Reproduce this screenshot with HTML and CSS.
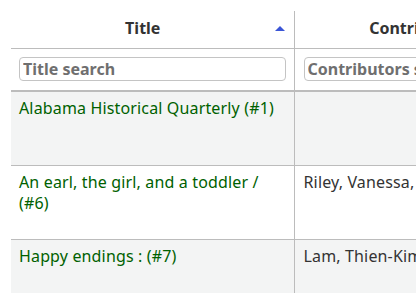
FILE: index.html
```html
<!DOCTYPE html>
<html lang="en">
<head>
    <meta charset="UTF-8">
    <title>Serials</title>
    <link rel="stylesheet" href="styles.css">
</head>
<body>
    <div class="wrap">
        <table class="results">
            <thead>
                <tr class="head-row">
                    <th class="col-title sorted">Title <span class="sort-arrow"></span></th>
                    <th class="col-contrib">Contributors</th>
                </tr>
                <tr class="filter-row">
                    <th class="col-title"><input type="text" placeholder="Title search"></th>
                    <th class="col-contrib"><input type="text" placeholder="Contributors search"></th>
                </tr>
            </thead>
            <tbody>
                <tr class="odd">
                    <td class="col-title"><a href="#">Alabama Historical Quarterly (#1)</a></td>
                    <td class="col-contrib"></td>
                </tr>
                <tr class="even">
                    <td class="col-title"><a href="#">An earl, the girl, and a toddler / (#6)</a></td>
                    <td class="col-contrib">Riley, Vanessa, author.</td>
                </tr>
                <tr class="odd">
                    <td class="col-title"><a href="#">Happy endings : (#7)</a></td>
                    <td class="col-contrib">Lam, Thien-Kim, author.</td>
                </tr>
            </tbody>
        </table>
    </div>
</body>
</html>
```

FILE: styles.css
```css
* {
    box-sizing: border-box;
}

body {
    margin: 0;
    font-family: 'Noto Sans', 'Open Sans', sans-serif;
    font-size: 16px;
    color: #333;
    background: #fff;
    overflow: hidden;
}

.wrap {
    padding: 11px 0 0 11px;
}

.results {
    border-collapse: collapse;
    table-layout: fixed;
    width: 535px;
}

.col-title {
    width: 283px;
}

.col-contrib {
    width: 252px;
    border-left: 1px solid #bcbcbc;
}

.head-row th {
    height: 37px;
    padding: 0 8px 3px;
    font-weight: 700;
    font-size: 16px;
    color: #333;
    text-align: center;
    border-bottom: 1px solid #bcbcbc;
    position: relative;
}

.head-row th.sorted {
    padding-right: 27px;
}

.sort-arrow {
    position: absolute;
    right: 9px;
    top: 15px;
    width: 0;
    height: 0;
    border-left: 5px solid transparent;
    border-right: 5px solid transparent;
    border-bottom: 5px solid #3a55d6;
}

.filter-row th {
    height: 43px;
    padding: 0 8px;
    border-bottom: 2px solid #bcbcbc;
    vertical-align: middle;
}

.filter-row input {
    display: block;
    width: 100%;
    height: 24px;
    margin: 0;
    padding: 0 3px;
    border: 1px solid #c4c4c4;
    border-radius: 4px;
    font-family: inherit;
    font-size: 16px;
    font-weight: 700;
    color: #333;
}

.filter-row input::placeholder {
    color: #6f6f6f;
    opacity: 1;
}

.filter-row .col-contrib {
    padding-left: 9px;
}

tbody td {
    height: 74px;
    padding: 6px 8px;
    vertical-align: top;
    line-height: 21px;
    letter-spacing: 0.15px;
    border-bottom: 1px solid #bcbcbc;
}

tbody td.col-contrib {
    padding-left: 9px;
    white-space: nowrap;
}

tbody tr.odd td {
    background: #f3f4f4;
}

tbody a {
    color: #006100;
    text-decoration: none;
}
```
